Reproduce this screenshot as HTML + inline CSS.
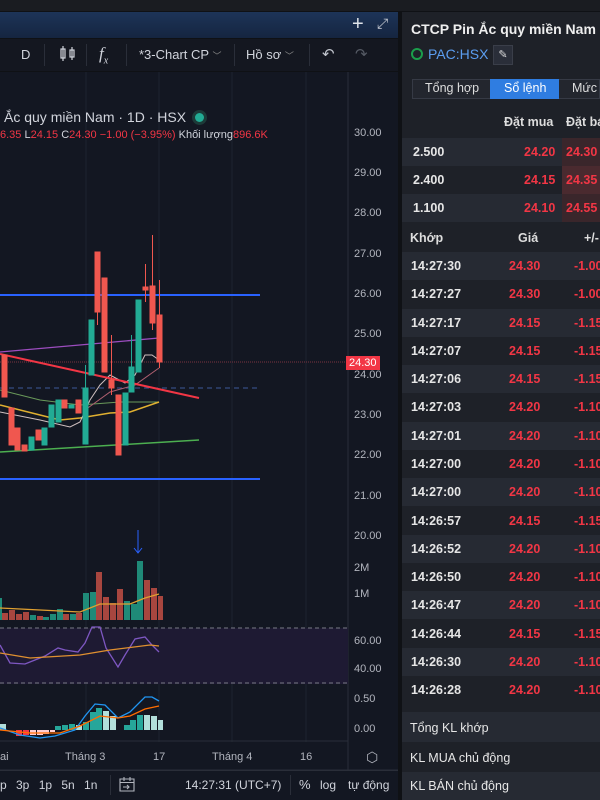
<!DOCTYPE html>
<html><head><meta charset="utf-8"><style>
*{margin:0;padding:0;box-sizing:border-box}
body{width:600px;height:800px;overflow:hidden;background:#0f1115;font-family:"Liberation Sans",sans-serif;position:relative}
.abs{position:absolute}
.t{position:absolute;white-space:nowrap}
.r{color:#f23645}
.rp{position:absolute;left:402px;width:198px;background:#1f222a}
.row{position:absolute;left:402px;width:198px;height:28px;font-size:12.5px;color:#e6e6e6;font-weight:bold}
.row span{position:absolute;top:7px}
</style></head><body>
<div class="abs" style="left:0;top:0;width:600px;height:11px;background:#1a1c21"></div>
<div class="abs" style="left:0;top:12px;width:398px;height:26px;background:linear-gradient(180deg,#1d3458,#152540)"></div>
<div class="t" style="left:352px;top:13px;color:#e0e4ea;font-size:20px">+</div>
<div class="t" style="left:377px;top:15px;color:#c8ccd4;font-size:14px">⤢</div>
<div class="abs" style="left:0;top:39px;width:398px;height:32px;background:#141720"></div>
<div class="t" style="left:21px;top:47px;color:#d1d4dc;font-size:13px">D</div>
<svg class="abs" style="left:58px;top:44px" width="20" height="20"><g stroke="#d1d4dc" fill="none" stroke-width="1.2"><rect x="3" y="5" width="4" height="9"/><line x1="5" y1="2" x2="5" y2="17"/><rect x="12" y="6" width="4" height="7"/><line x1="14" y1="3" x2="14" y2="16"/></g></svg>
<div class="t" style="left:99px;top:44px;color:#d1d4dc;font-size:17px;font-family:'Liberation Serif',serif;font-style:italic">f<sub style="font-size:10px">x</sub></div>
<div class="t" style="left:139px;top:47px;color:#d1d4dc;font-size:13px">*3-Chart CP <span style="font-size:9px;color:#888">﹀</span></div>
<div class="t" style="left:246px;top:47px;color:#d1d4dc;font-size:13px">Hồ sơ <span style="font-size:9px;color:#888">﹀</span></div>
<div class="t" style="left:322px;top:45px;color:#c0c4cc;font-size:15px">↶</div>
<div class="t" style="left:355px;top:45px;color:#555a64;font-size:15px">↷</div>
<div class="abs" style="left:44px;top:44px;width:1px;height:22px;background:#2a2e39"></div>
<div class="abs" style="left:86px;top:44px;width:1px;height:22px;background:#2a2e39"></div>
<div class="abs" style="left:126px;top:44px;width:1px;height:22px;background:#2a2e39"></div>
<div class="abs" style="left:234px;top:44px;width:1px;height:22px;background:#2a2e39"></div>
<div class="abs" style="left:309px;top:44px;width:1px;height:22px;background:#2a2e39"></div>
<div class="abs" style="left:0;top:72px;width:398px;height:728px;background:#131722"></div>
<svg class="abs" style="left:0;top:72px" width="398" height="700">
<g stroke="#1e2330" stroke-width="1">
<line x1="86" y1="0" x2="86" y2="670"/><line x1="159" y1="0" x2="159" y2="670"/><line x1="232" y1="0" x2="232" y2="670"/><line x1="306" y1="0" x2="306" y2="670"/>
</g>
<line x1="348" y1="0" x2="348" y2="700" stroke="#2a2e39"/>
<rect x="0" y="556" width="348" height="56" fill="#1e1a33"/>
<line x1="0" y1="556" x2="348" y2="556" stroke="#787b86" stroke-dasharray="4,3"/>
<line x1="0" y1="611" x2="348" y2="611" stroke="#787b86" stroke-dasharray="4,3"/>
<line x1="0" y1="669" x2="348" y2="669" stroke="#2a2e39"/>
<line x1="0" y1="698" x2="398" y2="698" stroke="#2a2e39"/>
</svg>
<svg class="abs" style="left:0;top:0" width="348" height="745">
<line x1="0" y1="295" x2="260" y2="295" stroke="#2962ff" stroke-width="2"/>
<line x1="0" y1="479" x2="260" y2="479" stroke="#2962ff" stroke-width="2"/>
<line x1="0" y1="388" x2="260" y2="388" stroke="#3c5a9a" stroke-dasharray="5,4"/>
<line x1="0" y1="362" x2="348" y2="362" stroke="#7a3340" stroke-dasharray="1,1"/>
<line x1="0" y1="352" x2="159" y2="338" stroke="#9c4dbf" stroke-width="1.3"/>
<line x1="0" y1="452" x2="199" y2="440" stroke="#4caf50" stroke-width="1.5"/>
<polyline fill="none" stroke="#6a9a5a" points="0,390 40,400 80,405 120,402 150,402 159,402"/>
<polyline fill="none" stroke="#e0b030" stroke-width="1.5" points="0,405 40,415 60,420 80,418 110,413 130,412 159,402"/>
<polyline fill="none" stroke="#d0c0c0" points="0,412 40,420 70,427 80,422 90,400 100,385 110,375 125,383 135,375 145,355 152,355 159,360"/>
<polyline fill="none" stroke="#b06070" points="85,410 110,392 135,385 159,368"/>
<line x1="0" y1="354" x2="199" y2="398" stroke="#f23645" stroke-width="2"/>
<g fill="#f0574f" stroke="#f0574f">
<rect x="2" y="355" width="5" height="42"/><rect x="9" y="408" width="5" height="37"/><rect x="15" y="428" width="5" height="22"/><rect x="22" y="445" width="5" height="6"/><rect x="36" y="430" width="5" height="10"/><rect x="62" y="400" width="5" height="8"/><rect x="76" y="400" width="5" height="13"/>
<rect x="95" y="252" width="5" height="60"/><line x1="97.5" y1="312" x2="97.5" y2="325"/>
<rect x="102" y="278" width="5" height="94"/><rect x="109" y="380" width="5" height="8"/><line x1="111.5" y1="335" x2="111.5" y2="395"/>
<rect x="116" y="395" width="5" height="60"/>
<rect x="143" y="287" width="5" height="3"/><line x1="145.5" y1="264" x2="145.5" y2="302"/>
<rect x="150" y="286" width="5" height="37"/><line x1="152.5" y1="235" x2="152.5" y2="330"/>
<rect x="157" y="315" width="5" height="47"/><line x1="159.5" y1="280" x2="159.5" y2="368"/>
</g>
<g fill="#22ab94" stroke="#22ab94">
<rect x="29" y="437" width="5" height="13"/><rect x="42" y="428" width="5" height="17"/><rect x="49" y="405" width="5" height="22"/><rect x="56" y="400" width="5" height="22"/><rect x="69" y="405" width="5" height="3"/>
<rect x="83" y="388" width="5" height="56"/><line x1="85.5" y1="365" x2="85.5" y2="444"/>
<rect x="89" y="320" width="5" height="55"/><rect x="123" y="393" width="5" height="52"/><rect x="129" y="367" width="5" height="25"/><line x1="131.5" y1="335" x2="131.5" y2="392"/>
<rect x="136" y="300" width="5" height="72"/>
</g>
<line x1="138" y1="530" x2="138" y2="553" stroke="#2962ff"/><polyline points="134,548 138,553 142,548" fill="none" stroke="#2962ff"/>
<g fill="#a8463f">
<rect x="2" y="613" width="6" height="7"/><rect x="9" y="610" width="6" height="10"/><rect x="16" y="614" width="6" height="6"/><rect x="23" y="612" width="6" height="8"/><rect x="37" y="616" width="6" height="4"/><rect x="63" y="614" width="6" height="6"/><rect x="76" y="613" width="6" height="7"/><rect x="96" y="572" width="6" height="48"/><rect x="103" y="597" width="6" height="23"/><rect x="110" y="603" width="6" height="17"/><rect x="117" y="589" width="6" height="31"/><rect x="144" y="580" width="6" height="40"/><rect x="151" y="588" width="6" height="32"/><rect x="158" y="596" width="5" height="24"/>
</g>
<g fill="#1f8a78">
<rect x="0" y="598" width="2" height="22"/><rect x="30" y="615" width="6" height="5"/><rect x="43" y="617" width="6" height="3"/><rect x="50" y="614" width="6" height="6"/><rect x="57" y="609" width="6" height="11"/><rect x="70" y="614" width="6" height="6"/><rect x="83" y="593" width="6" height="27"/><rect x="90" y="592" width="6" height="28"/><rect x="124" y="601" width="6" height="19"/><rect x="131" y="604" width="6" height="16"/><rect x="137" y="561" width="6" height="59"/>
</g>
<polyline fill="none" stroke="#e0a030" stroke-width="1.3" points="0,608 40,610 80,612 100,604 130,604 145,598 159,594"/>
<polyline fill="none" stroke="#7e57c2" stroke-width="1.3" points="0,645 10,663 25,664 35,660 45,656 58,648 65,650 78,652 85,643 92,627 100,627 106,648 118,667 125,655 135,639 145,637 152,645 159,652"/>
<polyline fill="none" stroke="#e09030" stroke-width="1.3" points="0,653 30,658 80,655 110,650 150,645 159,646"/>
<g fill="#26a69a"><rect x="90" y="712" width="6" height="18"/><rect x="96" y="708" width="6" height="22"/><rect x="83" y="722" width="6" height="8"/><rect x="62" y="725" width="6" height="5"/><rect x="69" y="724" width="6" height="6"/><rect x="55" y="726" width="6" height="4"/><rect x="137" y="715" width="6" height="15"/><rect x="130" y="720" width="6" height="10"/><rect x="124" y="725" width="6" height="5"/></g>
<g fill="#b2dfdb"><rect x="103" y="711" width="6" height="19"/><rect x="110" y="716" width="6" height="14"/><rect x="144" y="715" width="6" height="15"/><rect x="151" y="716" width="6" height="14"/><rect x="158" y="720" width="5" height="10"/><rect x="0" y="724" width="6" height="6"/><rect x="76" y="725" width="6" height="5"/></g>
<g fill="#f23645"><rect x="16" y="730" width="6" height="6"/><rect x="23" y="730" width="6" height="5"/></g>
<g fill="#ffcdd2"><rect x="30" y="730" width="6" height="5"/><rect x="37" y="730" width="6" height="5"/><rect x="43" y="730" width="6" height="4"/><rect x="50" y="730" width="5" height="2"/></g>
<polyline fill="none" stroke="#2196f3" stroke-width="1.3" points="0,728 20,735 40,738 55,736 75,730 85,716 95,704 105,705 118,718 130,712 145,697 152,697 159,701"/>
<polyline fill="none" stroke="#ff6d00" stroke-width="1.3" points="0,730 30,733 60,733 80,726 100,716 118,718 130,716 145,709 159,706"/>
</svg>
<div class="t" style="left:4px;top:109px;color:#d1d4dc;font-size:14px">Ắc quy miền Nam · 1D · HSX</div>
<div class="abs" style="left:195px;top:113px;width:9px;height:9px;border-radius:50%;background:#22ab94;box-shadow:0 0 0 3px #1c3a38"></div>
<div class="t r" style="left:0;top:129px;font-size:11px"><span>6.35 </span><span style="color:#d1d4dc">L</span>24.15 <span style="color:#d1d4dc">C</span>24.30 −1.00 (−3.95%) <span style="color:#d1d4dc">Khối lượng</span>896.6K</div>
<div style="position:absolute;left:354px;top:0;font-size:11px;color:#b2b5be;line-height:1">
<div class="t" style="top:128px">30.00</div><div class="t" style="top:168px">29.00</div><div class="t" style="top:208px">28.00</div><div class="t" style="top:249px">27.00</div><div class="t" style="top:289px">26.00</div><div class="t" style="top:329px">25.00</div><div class="t" style="top:370px">24.00</div><div class="t" style="top:410px">23.00</div><div class="t" style="top:450px">22.00</div><div class="t" style="top:491px">21.00</div><div class="t" style="top:531px">20.00</div><div class="t" style="top:563px">2M</div><div class="t" style="top:589px">1M</div><div class="t" style="top:636px">60.00</div><div class="t" style="top:664px">40.00</div><div class="t" style="top:694px">0.50</div><div class="t" style="top:724px">0.00</div>
</div>
<div class="t" style="left:346px;top:356px;width:34px;height:14px;background:#f23645;color:#fff;font-size:11px;padding:1px 3px">24.30</div>
<div style="font-size:11px;color:#b2b5be">
<div class="t" style="left:0;top:751px">ai</div><div class="t" style="left:65px;top:751px">Tháng 3</div><div class="t" style="left:153px;top:751px">17</div><div class="t" style="left:212px;top:751px">Tháng 4</div><div class="t" style="left:300px;top:751px">16</div><div class="t" style="left:366px;top:749px;font-size:14px">⬡</div>
</div>
<div class="abs" style="left:0;top:770px;width:398px;height:30px;background:#131722;border-top:1px solid #2a2e39"></div>
<div class="t" style="left:0;top:778px;font-size:12px;color:#d1d4dc;word-spacing:6px">p 3p 1p 5n 1n</div>
<div class="abs" style="left:110px;top:775px;width:1px;height:20px;background:#2a2e39"></div>
<svg class="abs" style="left:118px;top:775px" width="18" height="18"><g fill="none" stroke="#b2b5be" stroke-width="1.1"><path d="M2 4h14v12H2z"/><path d="M2 7.5h14M6 2v4M12 2v4"/><path d="M5 12h6M9 10l2 2-2 2"/></g></svg>
<div class="t" style="left:185px;top:778px;font-size:12px;color:#d1d4dc">14:27:31 (UTC+7)</div>
<div class="abs" style="left:290px;top:775px;width:1px;height:20px;background:#2a2e39"></div>
<div class="t" style="left:299px;top:777px;font-size:13px;color:#d1d4dc">%</div>
<div class="t" style="left:320px;top:778px;font-size:12px;color:#d1d4dc">log</div>
<div class="t" style="left:348px;top:778px;font-size:12px;color:#d1d4dc">tự động</div>

<div class="rp" style="top:12px;height:788px;background:#1e2128"></div>
<div class="t" style="left:411px;top:21px;font-size:14px;font-weight:bold;color:#eee">CTCP Pin Ắc quy miền Nam</div>
<div class="abs" style="left:411px;top:48px;width:12px;height:12px;border-radius:50%;border:2px solid #1b9e4b"></div>
<div class="t" style="left:428px;top:46px;font-size:14px;color:#5b9df0">PAC:HSX</div>
<div class="abs" style="left:493px;top:45px;width:20px;height:20px;background:#2a2e39;border:1px solid #3a3e49;color:#ddd;font-size:11px;text-align:center;line-height:18px">✎</div>
<div class="abs" style="left:412px;top:79px;width:188px;height:20px;background:#23262e;border:1px solid #363a45"></div>
<div class="t" style="left:425px;top:81px;font-size:12.5px;color:#ddd">Tổng hợp</div>
<div class="abs" style="left:490px;top:79px;width:69px;height:20px;background:#2f7de1"></div>
<div class="t" style="left:504px;top:81px;font-size:12.5px;color:#fff">Sổ lệnh</div>
<div class="t" style="left:572px;top:81px;font-size:12.5px;color:#ddd">Mức</div>
<div class="t" style="left:504px;top:115px;font-size:12.5px;font-weight:bold;color:#ddd">Đặt mua</div>
<div class="t" style="left:566px;top:115px;font-size:12.5px;font-weight:bold;color:#ddd">Đặt bá</div>
<div class="row" style="top:138px;background:#262a33"><span style="left:11px">2.500</span><span class="r" style="left:122px">24.20</span><span class="r" style="left:164px">24.30</span></div>
<div class="abs" style="left:562px;top:138px;width:38px;height:28px;background:#3a262b"></div>
<div class="t r" style="left:566px;top:145px;font-size:12.5px;font-weight:bold">24.30</div>
<div class="row" style="top:166px;background:#1e2128"><span style="left:11px">2.400</span><span class="r" style="left:122px">24.15</span></div>
<div class="abs" style="left:562px;top:166px;width:38px;height:28px;background:#4a2a2f"></div>
<div class="t r" style="left:566px;top:173px;font-size:12.5px;font-weight:bold">24.35</div>
<div class="row" style="top:194px;background:#262a33"><span style="left:11px">1.100</span><span class="r" style="left:122px">24.10</span></div>
<div class="abs" style="left:562px;top:194px;width:38px;height:28px;background:#3a262b"></div>
<div class="t r" style="left:566px;top:201px;font-size:12.5px;font-weight:bold">24.55</div>
<div class="t" style="left:410px;top:231px;font-size:12.5px;font-weight:bold;color:#ddd">Khớp</div>
<div class="t" style="left:518px;top:231px;font-size:12.5px;font-weight:bold;color:#ddd">Giá</div>
<div class="t" style="left:584px;top:231px;font-size:12.5px;font-weight:bold;color:#ddd">+/-</div>
<div class="row" style="top:252px;background:#262a33"><span style="left:9px">14:27:30</span><span class="r" style="left:107px">24.30</span><span class="r" style="left:172px">-1.00</span></div>
<div class="row" style="top:280px;background:#1e2128"><span style="left:9px">14:27:27</span><span class="r" style="left:107px">24.30</span><span class="r" style="left:172px">-1.00</span></div>
<div class="row" style="top:309px;background:#262a33"><span style="left:9px">14:27:17</span><span class="r" style="left:107px">24.15</span><span class="r" style="left:172px">-1.15</span></div>
<div class="row" style="top:337px;background:#1e2128"><span style="left:9px">14:27:07</span><span class="r" style="left:107px">24.15</span><span class="r" style="left:172px">-1.15</span></div>
<div class="row" style="top:365px;background:#262a33"><span style="left:9px">14:27:06</span><span class="r" style="left:107px">24.15</span><span class="r" style="left:172px">-1.15</span></div>
<div class="row" style="top:393px;background:#1e2128"><span style="left:9px">14:27:03</span><span class="r" style="left:107px">24.20</span><span class="r" style="left:172px">-1.10</span></div>
<div class="row" style="top:422px;background:#262a33"><span style="left:9px">14:27:01</span><span class="r" style="left:107px">24.20</span><span class="r" style="left:172px">-1.10</span></div>
<div class="row" style="top:450px;background:#1e2128"><span style="left:9px">14:27:00</span><span class="r" style="left:107px">24.20</span><span class="r" style="left:172px">-1.10</span></div>
<div class="row" style="top:478px;background:#262a33"><span style="left:9px">14:27:00</span><span class="r" style="left:107px">24.20</span><span class="r" style="left:172px">-1.10</span></div>
<div class="row" style="top:507px;background:#1e2128"><span style="left:9px">14:26:57</span><span class="r" style="left:107px">24.15</span><span class="r" style="left:172px">-1.15</span></div>
<div class="row" style="top:535px;background:#262a33"><span style="left:9px">14:26:52</span><span class="r" style="left:107px">24.20</span><span class="r" style="left:172px">-1.10</span></div>
<div class="row" style="top:563px;background:#1e2128"><span style="left:9px">14:26:50</span><span class="r" style="left:107px">24.20</span><span class="r" style="left:172px">-1.10</span></div>
<div class="row" style="top:591px;background:#262a33"><span style="left:9px">14:26:47</span><span class="r" style="left:107px">24.20</span><span class="r" style="left:172px">-1.10</span></div>
<div class="row" style="top:620px;background:#1e2128"><span style="left:9px">14:26:44</span><span class="r" style="left:107px">24.15</span><span class="r" style="left:172px">-1.15</span></div>
<div class="row" style="top:648px;background:#262a33"><span style="left:9px">14:26:30</span><span class="r" style="left:107px">24.20</span><span class="r" style="left:172px">-1.10</span></div>
<div class="row" style="top:676px;background:#1e2128"><span style="left:9px">14:26:28</span><span class="r" style="left:107px">24.20</span><span class="r" style="left:172px">-1.10</span></div>
<div class="abs" style="left:402px;top:712px;width:198px;height:30px;background:#262a33"></div>
<div class="t" style="left:410px;top:721px;font-size:12.5px;color:#e6e6e6">Tổng KL khớp</div>
<div class="abs" style="left:402px;top:742px;width:198px;height:30px;background:#1e2128"></div>
<div class="t" style="left:410px;top:751px;font-size:12.5px;color:#e6e6e6">KL MUA chủ động</div>
<div class="abs" style="left:402px;top:772px;width:198px;height:28px;background:#262a33"></div>
<div class="t" style="left:410px;top:779px;font-size:12.5px;color:#e6e6e6">KL BÁN chủ động</div>
</body></html>
